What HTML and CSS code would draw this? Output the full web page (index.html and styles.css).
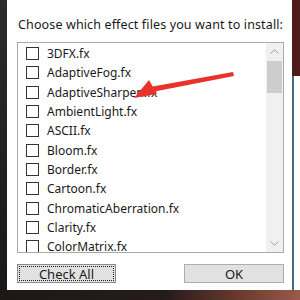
FILE: index.html
```html
<!DOCTYPE html>
<html lang="en">

<head>
  <meta charset="UTF-8">
  <title>Install effects</title>
  <link rel="stylesheet" href="styles.css">
</head>

<body>
  <div class="screen">
    <div class="left-edge"></div>

    <div class="dialog">
      <p class="prompt">Choose which effect files you want to install:</p>

      <div class="listbox">
        <ul class="items">
          <li><span class="box"></span>3DFX.fx</li>
          <li><span class="box"></span>AdaptiveFog.fx</li>
          <li><span class="box"></span>AdaptiveSharpen.fx</li>
          <li><span class="box"></span>AmbientLight.fx</li>
          <li><span class="box"></span>ASCII.fx</li>
          <li><span class="box"></span>Bloom.fx</li>
          <li><span class="box"></span>Border.fx</li>
          <li><span class="box"></span>Cartoon.fx</li>
          <li><span class="box"></span>ChromaticAberration.fx</li>
          <li><span class="box"></span>Clarity.fx</li>
          <li><span class="box"></span>ColorMatrix.fx</li>
        </ul>
        <div class="scrollbar">
          <div class="arrow">
            <svg width="9" height="5" viewBox="0 0 9 5"><path d="M0.5 4.5 L4.5 0.8 L8.5 4.5" fill="none" stroke="#a0a0a0" stroke-width="1"/></svg>
          </div>
          <div class="thumb"></div>
          <div class="track"></div>
          <div class="arrow">
            <svg width="9" height="5" viewBox="0 0 9 5"><path d="M0.5 0.5 L4.5 4.2 L8.5 0.5" fill="none" stroke="#a0a0a0" stroke-width="1"/></svg>
          </div>
        </div>
      </div>

      <div class="buttons">
        <button class="btn focused"><span>Check All</span></button>
        <button class="btn">OK</button>
      </div>
    </div>

    <div class="right-edge">
      <div class="maroon"></div>
      <div class="window"></div>
    </div>
  </div>
  <div class="floor"></div>

  <svg class="annotation" width="300" height="300" viewBox="0 0 300 300">
    <polygon points="233,72 234,76 152,92 150,87" fill="#e8322a"/>
    <polygon points="134,98 149,80 157,94" fill="#e8322a"/>
  </svg>
</body>

</html>
```

FILE: styles.css
```css
body {
  margin: 0;
  width: 300px;
  height: 300px;
  overflow: hidden;
  background: #1b1617;
  font-family: "Noto Sans", Arial, sans-serif;
  position: relative;
}

.screen {
  display: flex;
  height: 290px;
}

.left-edge {
  width: 7px;
  background: linear-gradient(#2c2a2a, #1a1818);
}

.dialog {
  width: 285px;
  background: #ffffff;
  padding: 16px 0 0 10px;
  box-sizing: border-box;
}

.prompt {
  margin: 0 0 8px 1px;
  font-size: 12.5px;
  letter-spacing: 0.13px;
  color: #1a1a1a;
  line-height: 18px;
  white-space: nowrap;
}

.listbox {
  width: 267px;
  height: 211px;
  border: 1px solid #a9a9a9;
  box-sizing: border-box;
  display: flex;
  overflow: hidden;
}

.items {
  list-style: none;
  margin: 0;
  padding: 1px 0 0 8px;
  flex: 1;
}

.items li {
  height: 19.3px;
  display: flex;
  align-items: center;
  font-size: 12px;
  color: #1a1a1a;
  white-space: nowrap;
}

.box {
  width: 11px;
  height: 11px;
  border: 1px solid #333333;
  margin-right: 8px;
  flex-shrink: 0;
}

.scrollbar {
  width: 17px;
  background: #f0f0f0;
  display: flex;
  flex-direction: column;
}

.arrow {
  height: 17px;
  display: flex;
  align-items: center;
  justify-content: center;
}

.thumb {
  height: 32px;
  margin: 1px 1px 0;
  background: #cdcdcd;
}

.track {
  flex: 1;
}

.buttons {
  display: flex;
  justify-content: space-between;
  width: 267px;
  margin-top: 11px;
}

.btn {
  width: 100px;
  height: 19px;
  padding: 0;
  background: #e1e1e1;
  border: 1px solid #adadad;
  font-family: "Noto Sans", Arial, sans-serif;
  font-size: 13px;
  color: #1a1a1a;
  display: flex;
  align-items: center;
  justify-content: center;
}

.btn.focused {
  width: 99px;
  border-color: #8a8a8a;
}

.btn.focused span {
  width: 93px;
  height: 13px;
  border: 1px dotted #202020;
  display: flex;
  align-items: center;
  justify-content: center;
}

.right-edge {
  flex: 1;
  display: flex;
  flex-direction: column;
}

.maroon {
  height: 76px;
  background: #4e1a1c;
}

.window {
  flex: 1;
  background: #fbfdfd;
  border-left: 2px solid #3f6d78;
}

.floor {
  height: 10px;
  background: linear-gradient(90deg, #1d1718 0%, #261b1b 55%, #6b3a30 80%, #9a5a48 100%);
}

.annotation {
  position: absolute;
  left: 0;
  top: 0;
}
```
